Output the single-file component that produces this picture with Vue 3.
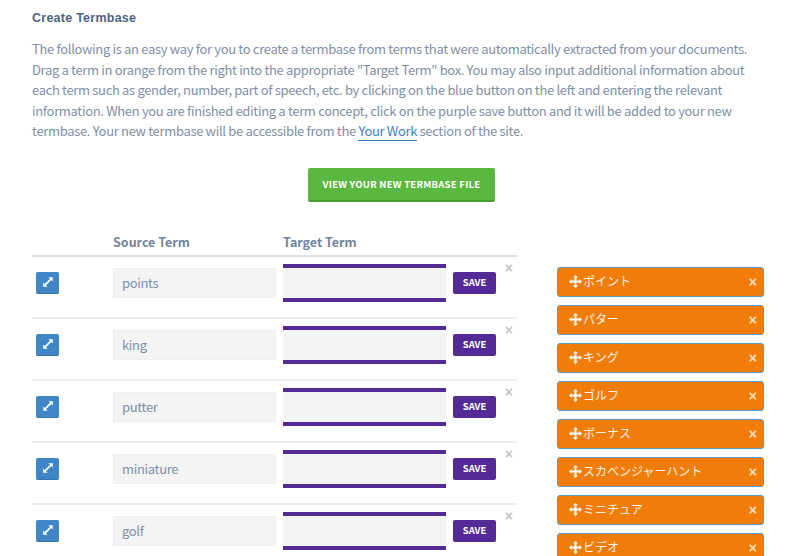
<script setup>
const sourceTerms = ['points', 'king', 'putter', 'miniature', 'golf']
const extracted = ['ポイント', 'パター', 'キング', 'ゴルフ', 'ボーナス', 'スカベンジャーハント', 'ミニチュア', 'ビデオ']
</script>

<template>
  <div class="page">
    <h1 class="title">Create Termbase</h1>
    <p class="intro">
      The following is an easy way for you to create a termbase from terms that were automatically extracted from your documents.<br>
      Drag a term in orange from the right into the appropriate "Target Term" box. You may also input additional information about<br>
      each term such as gender, number, part of speech, etc. by clicking on the blue button on the left and entering the relevant<br>
      information. When you are finished editing a term concept, click on the purple save button and it will be added to your new<br>
      termbase. Your new termbase will be accessible from the <a class="link">Your Work</a> section of the site.
    </p>

    <div class="view-wrap">
      <button class="view-btn">VIEW YOUR NEW TERMBASE FILE</button>
    </div>

    <div class="workspace">
      <div class="table">
        <div class="head">
          <span class="head-source">Source Term</span>
          <span>Target Term</span>
        </div>
        <div v-for="term in sourceTerms" :key="term" class="row">
          <button class="expand">
            <svg width="12" height="12" viewBox="0 0 12 12">
              <path d="M6.4 1.2h4.4v4.4L9.2 4 4 9.2l1.6 1.6H1.2V6.4L2.8 8 8 2.8z" fill="#fff" />
            </svg>
          </button>
          <div class="source">{{ term }}</div>
          <div class="target"></div>
          <button class="save">SAVE</button>
          <span class="remove">×</span>
        </div>
      </div>

      <div class="tags">
        <div v-for="tag in extracted" :key="tag" class="tag">
          <svg class="move" width="13" height="13" viewBox="0 0 13 13">
            <path d="M6.5 0 9 2.6H7.5v2.9h2.9V4L13 6.5 10.4 9V7.5H7.5v2.9H9L6.5 13 4 10.4h1.5V7.5H2.6V9L0 6.5 2.6 4v1.5h2.9V2.6H4z" fill="#fff" />
          </svg>
          <span class="tag-text">{{ tag }}</span>
          <span class="tag-x">×</span>
        </div>
      </div>
    </div>
  </div>
</template>

<style>
html, body {
  margin: 0;
  background: #fff;
}
</style>

<style scoped>
.page {
  width: 800px;
  height: 556px;
  overflow: hidden;
  box-sizing: border-box;
  padding: 11px 32px 0;
  font-family: "Noto Sans CJK JP", "Noto Sans", sans-serif;
  color: #7f8fa8;
}

.title {
  margin: 0;
  font-family: "Liberation Sans", Arial, sans-serif;
  font-size: 12.5px;
  line-height: 14px;
  font-weight: 700;
  letter-spacing: 0.25px;
  color: #4f6384;
}

.intro {
  margin: 14px 0 0;
  font-size: 13px;
  line-height: 20.5px;
  letter-spacing: -0.33px;
  white-space: nowrap;
}

.link {
  color: #3f7fc4;
  border-bottom: 1px solid #3f7fc4;
}

.view-wrap {
  display: flex;
  justify-content: center;
  padding-left: 3px;
  margin-top: 26px;
}

.view-btn {
  width: 187px;
  height: 34px;
  padding: 2px 0 0;
  border: 0;
  border-bottom: 2px solid #47a034;
  border-radius: 2px;
  background: #5ab73f;
  color: #fff;
  font: 700 9.5px/1 "Noto Sans CJK JP", sans-serif;
  letter-spacing: 0.26px;
  white-space: nowrap;
}

.workspace {
  display: flex;
  align-items: flex-start;
  gap: 40px;
  margin-top: 31px;
}

.table {
  width: 485px;
  flex: none;
}

.head {
  display: flex;
  align-items: flex-start;
  height: 22px;
  border-bottom: 2px solid #e0e0e0;
  font-size: 12.5px;
  line-height: 18px;
  font-weight: 700;
  color: #73849e;
}

.head-source {
  margin-left: 81px;
  width: 170px;
}

.row {
  position: relative;
  display: flex;
  align-items: flex-start;
  height: 60px;
  border-bottom: 2px solid #eeeeee;
}

.expand {
  display: flex;
  align-items: center;
  justify-content: center;
  width: 23px;
  height: 22px;
  margin: 15px 0 0 4px;
  padding: 0;
  border: 0;
  border-bottom: 1px solid #3676ae;
  border-radius: 2px;
  background: #3f86c6;
}

.source {
  width: 163px;
  height: 30px;
  box-sizing: border-box;
  margin: 11px 0 0 54px;
  padding-left: 8px;
  background: #f4f4f4;
  border: 1px solid #efefef;
  font-size: 13px;
  letter-spacing: -0.33px;
  line-height: 28px;
}

.target {
  width: 163px;
  height: 38px;
  box-sizing: border-box;
  margin: 7px 0 0 7px;
  background: #f4f4f4;
  border-top: 4px solid #542a96;
  border-bottom: 4px solid #542a96;
}

.save {
  width: 43px;
  height: 22px;
  margin: 15px 0 0 7px;
  padding: 0;
  border: 0;
  border-radius: 2px;
  background: #542a96;
  color: #fff;
  font: 700 9.5px/1 "Noto Sans CJK JP", sans-serif;
}

.remove {
  position: absolute;
  right: 4px;
  top: 3px;
  color: #c4c4c4;
  font: 700 14px/16px "Liberation Sans", sans-serif;
}

.tags {
  display: flex;
  flex-direction: column;
  gap: 8px;
  width: 207px;
  margin-top: 34px;
  flex: none;
}

.tag {
  display: flex;
  align-items: center;
  height: 30px;
  box-sizing: border-box;
  padding: 0 6px 0 11px;
  border: 1px solid #5a9ac6;
  border-radius: 3px;
  background: #f07d0a;
  color: #fff;
  font-size: 12px;
}

.move {
  flex: none;
  margin-right: 1px;
}

.tag-text {
  flex: 1;
  padding-bottom: 2px;
  opacity: 0.9;
}

.tag-x {
  color: #fde0c0;
  font: 700 14px/1 "Liberation Sans", sans-serif;
}
</style>
